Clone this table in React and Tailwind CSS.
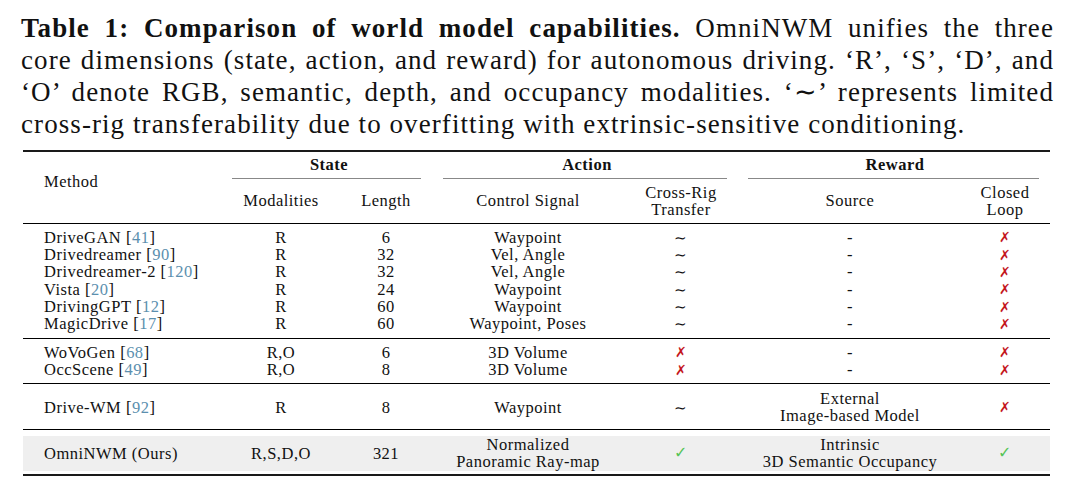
import React from 'react';

const COLS = 'grid grid-cols-[201px_114px_96px_188px_118px_220px_90px]';
const CELL = 'flex items-center justify-center whitespace-nowrap';

const rowsA = [
  { name: 'DriveGAN', ref: '41', mod: 'R', len: '6', ctrl: 'Waypoint' },
  { name: 'Drivedreamer', ref: '90', mod: 'R', len: '32', ctrl: 'Vel, Angle' },
  { name: 'Drivedreamer-2', ref: '120', mod: 'R', len: '32', ctrl: 'Vel, Angle' },
  { name: 'Vista', ref: '20', mod: 'R', len: '24', ctrl: 'Waypoint' },
  { name: 'DrivingGPT', ref: '12', mod: 'R', len: '60', ctrl: 'Waypoint' },
  { name: 'MagicDrive', ref: '17', mod: 'R', len: '60', ctrl: 'Waypoint, Poses' },
];

const rowsB = [
  { name: 'WoVoGen', ref: '68', mod: 'R,O', len: '6', ctrl: '3D Volume' },
  { name: 'OccScene', ref: '49', mod: 'R,O', len: '8', ctrl: '3D Volume' },
];

const Cite = ({ n }) => (
  <>
    [<span className="text-[#5b8fae]">{n}</span>]
  </>
);

const Cross = () => (
  <span className="inline-block leading-none font-['DejaVu_Sans',sans-serif] text-[14px] text-[#c4161c]">✗</span>
);

const Check = () => (
  <span className="inline-block leading-none font-['DejaVu_Sans',sans-serif] text-[16px] text-[#55c455]">✓</span>
);

const Tilde = () => <span className="inline-block leading-none text-[15px] translate-y-[1px]">∼</span>;

function Row({ r, transfer }) {
  return (
    <div className={`${COLS} h-[17.35px]`}>
      <div className="flex items-center pl-[21px] whitespace-nowrap">
        {r.name}&nbsp;<Cite n={r.ref} />
      </div>
      <div className={CELL}>{r.mod}</div>
      <div className={CELL}>{r.len}</div>
      <div className={CELL}>{r.ctrl}</div>
      <div className={CELL}>{transfer}</div>
      <div className={CELL}>-</div>
      <div className={CELL}>
        <Cross />
      </div>
    </div>
  );
}

export default function App() {
  return (
    <div className="w-[1074px] h-[486px] bg-white text-[#111] font-['Liberation_Serif','Times_New_Roman',serif] overflow-hidden">
      <div className="pt-[12px] pl-[21px] pr-[20px] text-[27px] leading-[32px] tracking-[0.04em]">
        <div className="text-justify [text-align-last:justify]">
          <span className="font-bold">Table 1: Comparison of world model capabilities.</span> OmniNWM
          unifies the three
        </div>
        <div className="text-justify [text-align-last:justify]">
          core dimensions (state, action, and reward) for autonomous driving. ‘R’, ‘S’, ‘D’, and
        </div>
        <div className="text-justify [text-align-last:justify]">
          ‘O’ denote RGB, semantic, depth, and occupancy modalities. ‘∼’ represents limited
        </div>
        <div>cross-rig transferability due to overfitting with extrinsic-sensitive conditioning.</div>
      </div>

      <div className="mt-[10px] ml-[23px] w-[1027px] text-[16.5px] leading-[17.35px] tracking-[0.03em]">
        <div className="h-[2px] bg-[#1a1a1a]" />

        {/* header */}
        <div className={`${COLS} grid-rows-[26px_1px_44px]`}>
          <div className="row-span-3 pl-[21px] pt-[21px]">Method</div>
          <div className="col-span-2 flex items-center justify-center font-bold">State</div>
          <div className="col-span-2 flex items-center justify-center font-bold">Action</div>
          <div className="col-span-2 flex items-center justify-center font-bold">Reward</div>
          <div className="col-span-2 ml-[8px] mr-[13px] bg-[#888]" />
          <div className="col-span-2 ml-[9px] mr-[13px] bg-[#888]" />
          <div className="col-span-2 ml-[8px] mr-[11px] bg-[#888]" />
          <div className={CELL}>Modalities</div>
          <div className={CELL}>Length</div>
          <div className={CELL}>Control Signal</div>
          <div className="flex flex-col items-center justify-center text-center">
            <span>Cross-Rig</span>
            <span>Transfer</span>
          </div>
          <div className={CELL}>Source</div>
          <div className="flex flex-col items-center justify-center text-center">
            <span>Closed</span>
            <span>Loop</span>
          </div>
        </div>
        <div className="h-[1px] bg-black" />

        <div className="pt-[4.6px] pb-[5.4px]">
          {rowsA.map((r) => (
            <Row key={r.name} r={r} transfer={<Tilde />} />
          ))}
        </div>
        <div className="h-[1px] bg-black" />

        <div className="pt-[4.6px] pb-[5px]">
          {rowsB.map((r) => (
            <Row key={r.name} r={r} transfer={<Cross />} />
          ))}
        </div>
        <div className="h-[1px] bg-black" />

        <div className={`${COLS} h-[34.7px] mt-[5.6px] mb-[4.3px]`}>
          <div className="flex items-center pl-[21px] whitespace-nowrap">
            Drive-WM&nbsp;<Cite n="92" />
          </div>
          <div className={CELL}>R</div>
          <div className={CELL}>8</div>
          <div className={CELL}>Waypoint</div>
          <div className={CELL}>
            <Tilde />
          </div>
          <div className="flex flex-col items-center justify-center whitespace-nowrap">
            <span>External</span>
            <span>Image-based Model</span>
          </div>
          <div className={CELL}>
            <Cross />
          </div>
        </div>
        <div className="h-[1px] bg-black" />

        <div className="pt-[6px] pb-[3.3px]">
          <div className={`${COLS} h-[34.7px] bg-[#efefef]`}>
            <div className="flex items-center pl-[21px] whitespace-nowrap">OmniNWM (Ours)</div>
            <div className={CELL}>R,S,D,O</div>
            <div className={CELL}>321</div>
            <div className="flex flex-col items-center justify-center whitespace-nowrap">
              <span>Normalized</span>
              <span>Panoramic Ray-map</span>
            </div>
            <div className={CELL}>
              <Check />
            </div>
            <div className="flex flex-col items-center justify-center whitespace-nowrap">
              <span>Intrinsic</span>
              <span>3D Semantic Occupancy</span>
            </div>
            <div className={CELL}>
              <Check />
            </div>
          </div>
        </div>
        <div className="h-[2px] bg-[#1a1a1a]" />
      </div>
    </div>
  );
}
